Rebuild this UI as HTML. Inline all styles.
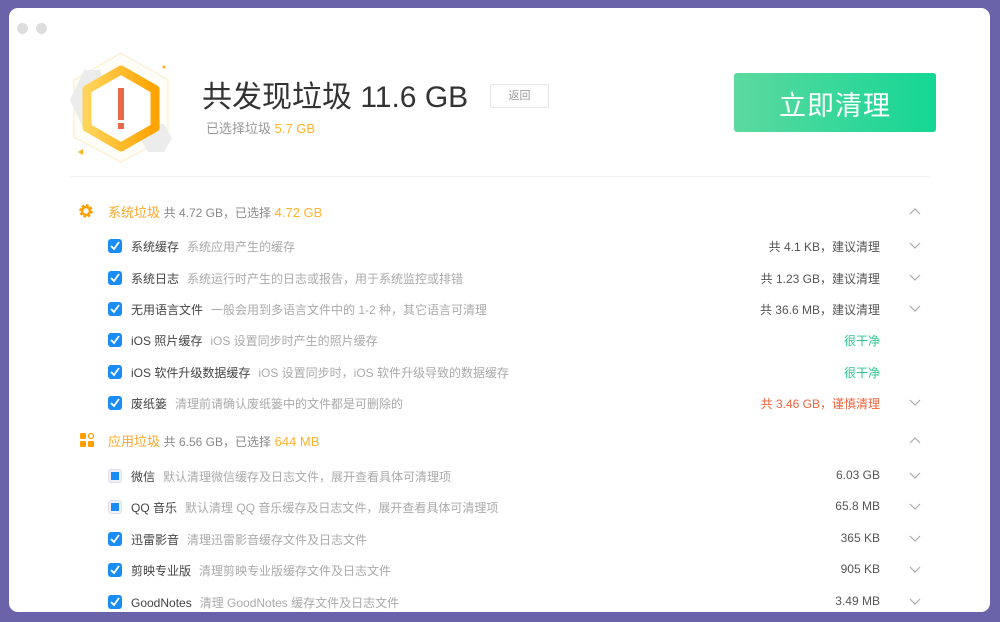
<!DOCTYPE html>
<html><head><meta charset="utf-8"><style>
*{margin:0;padding:0;box-sizing:border-box}
body{width:1000px;height:622px;background:#6a63a9;position:relative;overflow:hidden;font-family:"Liberation Sans","Noto Sans CJK SC",sans-serif}
.win{position:absolute;left:9px;top:8px;width:981px;height:604px;background:#fff;border-radius:9px;overflow:hidden}
.dot{position:absolute;top:15px;width:11px;height:11px;border-radius:50%;background:#ddd}
.a{position:absolute;white-space:nowrap}
.row{position:absolute;left:0;width:981px;height:20px}
.cb{position:absolute;left:99px;top:3px;width:14px;height:14px;border-radius:3px;background:#1a8cf5}
.cb svg{position:absolute;left:2px;top:2px}
.cbp{position:absolute;left:99px;top:3px;width:14px;height:14px;border-radius:3px;background:#eef0f4;border:1px solid #dde}
.cbp i{position:absolute;left:2px;top:2px;width:8px;height:8px;background:#1a8cf5}
.nm{position:absolute;left:122px;top:2px;font-size:12px;color:#444}
.ds{font-size:12px;color:#aaa;margin-left:8px}
.rt{position:absolute;right:110px;top:2px;font-size:12px;color:#555}
.ch{position:absolute;left:900px;top:6px}
</style></head><body>
<div class="win">
<div class="dot" style="left:8px"></div><div class="dot" style="left:27px"></div>
<svg class="a" style="left:51px;top:32px" width="120" height="130" viewBox="0 0 120 130">
<defs><linearGradient id="g" x1="0" x2="1" y1="0" y2="0"><stop offset="0" stop-color="#ffd45a"/><stop offset="1" stop-color="#ffa300"/></linearGradient></defs>
<polygon points="61,13 108,40 108,97 61,122 14,97 14,40" fill="#fffdf7" stroke="#fdf0d8" stroke-width="1.5"/>
<polygon points="24,30 40,30 48,58 40,90 24,90 10,60" fill="#ececec"/>
<polygon points="88,84 104,84 112,98 104,112 88,112 80,98" fill="#ececec"/>
<polygon points="61,30 95,49.5 95,87.5 61,107 27,87.5 27,49.5" fill="#fff" stroke="url(#g)" stroke-width="9" stroke-linejoin="round"/>
<rect x="58" y="48" width="6" height="32" fill="#e8694a"/><rect x="58" y="83" width="6" height="6" fill="#e8694a"/>
<circle cx="104" cy="27" r="1.5" fill="#ffb020"/><polygon points="18,112 23,109 23,115" fill="#ffb020"/>
</svg>
<div class="a" style="left:193px;top:64px;font-size:30px;color:#333">共发现垃圾 11.6 GB</div>
<div class="a" style="left:481px;top:76px;width:59px;height:24px;border:1px solid #e6e6e6;border-radius:2px;font-size:11px;color:#999;text-align:center;line-height:22px">返回</div>
<div class="a" style="left:197px;top:110px;font-size:13px;color:#999">已选择垃圾 <span style="color:#ffb32c">5.7 GB</span></div>
<div class="a" style="left:725px;top:65px;width:202px;height:59px;border-radius:3px;background:linear-gradient(90deg,#5cd99f,#14d694);color:#fff;font-size:27px;text-align:center;line-height:59px;padding-top:4px;letter-spacing:1px">立即清理</div>
<div class="a" style="left:61px;top:168px;width:859px;height:1px;background:#eee"></div>

<div class="row" style="top:193px">
<svg class="a" style="left:70px;top:3px" width="14" height="14" viewBox="0 0 14 14"><circle cx="7" cy="7" r="5" fill="none" stroke="#ffa000" stroke-width="3.5" stroke-dasharray="2.3 1.6"/><circle cx="7" cy="7" r="4" fill="none" stroke="#ffa000" stroke-width="2.5"/></svg>
<div class="a" style="left:99px;top:1px;font-size:13px;color:#ffa727">系统垃圾 <span style="font-size:12px;color:#888">共 4.72 GB，已选择</span> <span style="color:#ffb32c">4.72 GB</span></div>
<svg class="ch" width="12" height="8"><path d="M1 7L6 2L11 7" fill="none" stroke="#aaa" stroke-width="1.2"/></svg></div>

<div class="row" style="top:228px"><div class="cb"><svg width="10" height="10"><path d="M1 5L4 8L9 1" fill="none" stroke="#fff" stroke-width="1.8"/></svg></div><div class="nm">系统缓存<span class="ds">系统应用产生的缓存</span></div><div class="rt">共 4.1 KB，建议清理</div><svg class="ch" width="12" height="8"><path d="M1 1L6 6L11 1" fill="none" stroke="#aaa" stroke-width="1.2"/></svg></div>
<div class="row" style="top:260px"><div class="cb"><svg width="10" height="10"><path d="M1 5L4 8L9 1" fill="none" stroke="#fff" stroke-width="1.8"/></svg></div><div class="nm">系统日志<span class="ds">系统运行时产生的日志或报告，用于系统监控或排错</span></div><div class="rt">共 1.23 GB，建议清理</div><svg class="ch" width="12" height="8"><path d="M1 1L6 6L11 1" fill="none" stroke="#aaa" stroke-width="1.2"/></svg></div>
<div class="row" style="top:291px"><div class="cb"><svg width="10" height="10"><path d="M1 5L4 8L9 1" fill="none" stroke="#fff" stroke-width="1.8"/></svg></div><div class="nm">无用语言文件<span class="ds">一般会用到多语言文件中的 1-2 种，其它语言可清理</span></div><div class="rt">共 36.6 MB，建议清理</div><svg class="ch" width="12" height="8"><path d="M1 1L6 6L11 1" fill="none" stroke="#aaa" stroke-width="1.2"/></svg></div>
<div class="row" style="top:322px"><div class="cb"><svg width="10" height="10"><path d="M1 5L4 8L9 1" fill="none" stroke="#fff" stroke-width="1.8"/></svg></div><div class="nm">iOS 照片缓存<span class="ds">iOS 设置同步时产生的照片缓存</span></div><div class="rt" style="color:#27c98a">很干净</div></div>
<div class="row" style="top:354px"><div class="cb"><svg width="10" height="10"><path d="M1 5L4 8L9 1" fill="none" stroke="#fff" stroke-width="1.8"/></svg></div><div class="nm">iOS 软件升级数据缓存<span class="ds">iOS 设置同步时，iOS 软件升级导致的数据缓存</span></div><div class="rt" style="color:#27c98a">很干净</div></div>
<div class="row" style="top:385px"><div class="cb"><svg width="10" height="10"><path d="M1 5L4 8L9 1" fill="none" stroke="#fff" stroke-width="1.8"/></svg></div><div class="nm">废纸篓<span class="ds">清理前请确认废纸篓中的文件都是可删除的</span></div><div class="rt" style="color:#f0643c">共 3.46 GB，谨慎清理</div><svg class="ch" width="12" height="8"><path d="M1 1L6 6L11 1" fill="none" stroke="#aaa" stroke-width="1.2"/></svg></div>

<div class="row" style="top:422px">
<svg class="a" style="left:71px;top:3px" width="14" height="14"><rect x="0" y="0" width="6" height="6" rx="1" fill="#ffa000"/><rect x="0" y="8" width="6" height="6" rx="1" fill="#ffa000"/><rect x="8" y="8" width="6" height="6" rx="1" fill="#ffa000"/><circle cx="11" cy="3" r="2.5" fill="none" stroke="#ffa000" stroke-width="1.3"/></svg>
<div class="a" style="left:99px;top:1px;font-size:13px;color:#ffa727">应用垃圾 <span style="font-size:12px;color:#888">共 6.56 GB，已选择</span> <span style="color:#ffb32c">644 MB</span></div>
<svg class="ch" width="12" height="8"><path d="M1 7L6 2L11 7" fill="none" stroke="#aaa" stroke-width="1.2"/></svg></div>

<div class="row" style="top:458px"><div class="cbp"><i></i></div><div class="nm">微信<span class="ds">默认清理微信缓存及日志文件，展开查看具体可清理项</span></div><div class="rt">6.03 GB</div><svg class="ch" width="12" height="8"><path d="M1 1L6 6L11 1" fill="none" stroke="#aaa" stroke-width="1.2"/></svg></div>
<div class="row" style="top:489px"><div class="cbp"><i></i></div><div class="nm">QQ 音乐<span class="ds">默认清理 QQ 音乐缓存及日志文件，展开查看具体可清理项</span></div><div class="rt">65.8 MB</div><svg class="ch" width="12" height="8"><path d="M1 1L6 6L11 1" fill="none" stroke="#aaa" stroke-width="1.2"/></svg></div>
<div class="row" style="top:521px"><div class="cb"><svg width="10" height="10"><path d="M1 5L4 8L9 1" fill="none" stroke="#fff" stroke-width="1.8"/></svg></div><div class="nm">迅雷影音<span class="ds">清理迅雷影音缓存文件及日志文件</span></div><div class="rt">365 KB</div><svg class="ch" width="12" height="8"><path d="M1 1L6 6L11 1" fill="none" stroke="#aaa" stroke-width="1.2"/></svg></div>
<div class="row" style="top:552px"><div class="cb"><svg width="10" height="10"><path d="M1 5L4 8L9 1" fill="none" stroke="#fff" stroke-width="1.8"/></svg></div><div class="nm">剪映专业版<span class="ds">清理剪映专业版缓存文件及日志文件</span></div><div class="rt">905 KB</div><svg class="ch" width="12" height="8"><path d="M1 1L6 6L11 1" fill="none" stroke="#aaa" stroke-width="1.2"/></svg></div>
<div class="row" style="top:584px"><div class="cb"><svg width="10" height="10"><path d="M1 5L4 8L9 1" fill="none" stroke="#fff" stroke-width="1.8"/></svg></div><div class="nm">GoodNotes<span class="ds">清理 GoodNotes 缓存文件及日志文件</span></div><div class="rt">3.49 MB</div><svg class="ch" width="12" height="8"><path d="M1 1L6 6L11 1" fill="none" stroke="#aaa" stroke-width="1.2"/></svg></div>
</div>
</body></html>
